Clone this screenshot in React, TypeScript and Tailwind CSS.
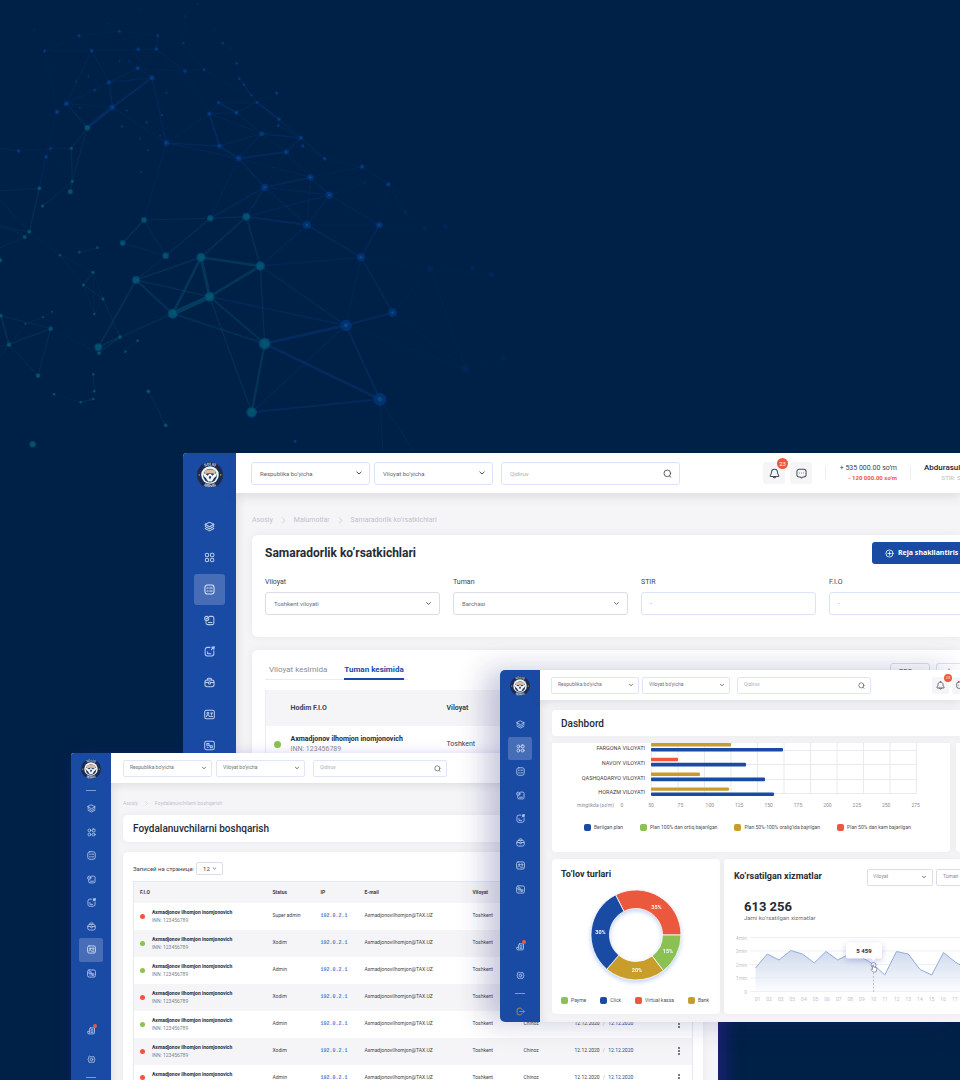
import React from "react";
import clsx from "clsx";

/* ---------- background constellation ---------- */

type Node = [number, number, number, "t" | "b" | "f"];

const NODES: Node[] = [
  [603, 772, 14, "t"], [781, 798, 14, "t"], [629, 890, 15, "t"], [518, 941, 15, "t"], [408, 840, 12, "t"],
  [794, 1031, 18, "t"], [755, 1237, 16, "t"], [1038, 976, 17, "b"], [1140, 1198, 19, "b"], [1178, 938, 13, "b"],
  [1083, 772, 12, "b"], [1138, 675, 10, "b"], [921, 675, 12, "b"], [739, 650, 12, "t"], [631, 655, 10, "t"],
  [497, 767, 10, "t"], [432, 660, 9, "t"], [368, 729, 9, "t"], [794, 562, 11, "b"], [988, 585, 11, "b"],
  [931, 532, 10, "b"], [716, 475, 9, "b"], [658, 438, 8, "b"], [499, 429, 9, "b"], [628, 341, 7, "b"],
  [656, 308, 6, "b"], [709, 338, 7, "b"], [785, 401, 8, "b"], [859, 456, 8, "b"], [903, 414, 7, "b"],
  [837, 358, 6, "b"], [771, 307, 5, "b"], [754, 286, 4, "b"], [731, 254, 4, "b"], [718, 236, 4, "b"],
  [262, 383, 9, "t"], [337, 322, 9, "b"], [199, 311, 8, "b"], [327, 247, 7, "b"], [456, 233, 8, "b"],
  [413, 205, 7, "b"], [171, 336, 7, "b"], [275, 152, 6, "b"], [237, 107, 5, "b"], [358, 94, 5, "b"],
  [415, 148, 6, "b"], [469, 147, 6, "b"], [473, 107, 5, "b"], [134, 153, 5, "b"], [555, 214, 6, "b"],
  [612, 209, 5, "b"], [214, 445, 5, "t"], [152, 445, 5, "b"], [138, 470, 6, "b"], [118, 565, 6, "t"],
  [217, 544, 5, "t"], [211, 575, 8, "t"], [128, 618, 5, "t"], [88, 695, 6, "t"], [74, 711, 6, "t"],
  [180, 766, 4, "t"], [279, 817, 5, "t"], [250, 855, 5, "t"], [309, 897, 5, "t"], [283, 942, 4, "t"],
  [360, 1011, 6, "t"], [295, 1042, 12, "t"], [297, 1059, 6, "t"], [152, 986, 7, "t"], [27, 1034, 7, "t"],
  [3, 947, 6, "t"], [114, 1127, 7, "t"], [98, 1333, 10, "t"], [445, 1174, 6, "t"], [497, 1276, 6, "t"],
  [280, 1123, 4, "t"], [283, 1174, 4, "t"], [280, 1197, 4, "t"], [242, 1207, 4, "t"], [162, 1183, 4, "t"],
  [238, 757, 4, "t"], [292, 743, 4, "t"], [376, 1055, 4, "t"], [413, 1022, 4, "t"], [1291, 806, 9, "f"],
  [1397, 1107, 12, "f"], [1086, 500, 7, "b"], [1094, 548, 6, "f"], [1165, 553, 7, "b"], [1216, 638, 7, "f"],
  [1275, 686, 7, "f"], [1335, 680, 7, "f"], [974, 476, 6, "b"], [908, 438, 5, "b"], [835, 377, 4, "b"],
  [830, 279, 5, "b"], [710, 190, 4, "b"], [692, 146, 4, "f"], [668, 130, 4, "b"], [643, 88, 4, "f"],
  [550, 130, 4, "b"], [555, 48, 5, "f"], [593, 11, 5, "f"], [418, 30, 4, "f"], [322, 70, 5, "f"],
  [103, 88, 5, "f"], [56, 453, 6, "b"], [486, 345, 4, "b"], [440, 367, 4, "b"], [366, 379, 4, "b"],
  [284, 270, 4, "b"], [76, 971, 3, "t"], [129, 952, 3, "t"], [156, 935, 3, "t"], [1475, 824, 8, "f"],
  [1418, 805, 8, "f"], [500, 279, 3, "b"], [420, 415, 3, "b"], [480, 407, 3, "b"], [423, 516, 3, "b"],
  [0, 781, 7, "t"], [885, 1324, 5, "b"], [240, 323, 3, "b"], [228, 245, 3, "b"], [265, 229, 3, "b"],
  [388, 184, 3, "b"], [359, 184, 3, "b"], [444, 450, 3, "b"], [380, 332, 3, "b"], [1512, 1075, 8, "f"],
];

/* [from, to, stroke width] */
const EDGES: [number, number, number][] = [
  [0, 1, 8], [0, 2, 9], [0, 3, 8], [0, 4, 5], [1, 2, 8], [2, 3, 13], [2, 4, 4], [3, 4, 6], [2, 5, 6], [3, 5, 5],
  [1, 5, 4], [2, 6, 4], [5, 6, 7], [5, 7, 8], [2, 7, 5], [1, 7, 5], [6, 7, 4], [5, 8, 8], [6, 8, 6], [7, 8, 6],
  [7, 9, 6], [9, 10, 5], [7, 10, 3], [1, 10, 4], [10, 11, 5], [10, 12, 5], [1, 12, 4], [12, 13, 6], [13, 1, 5],
  [0, 13, 5], [13, 14, 4], [14, 15, 4], [14, 16, 3], [15, 16, 3], [16, 17, 5], [15, 17, 3], [4, 15, 3],
  [13, 18, 5], [14, 18, 5], [18, 12, 4], [18, 19, 4], [18, 20, 5], [19, 20, 5], [12, 19, 4], [12, 20, 3],
  [13, 19, 4], [12, 11, 3], [19, 11, 4], [18, 21, 5], [21, 14, 3], [21, 22, 6], [22, 23, 5], [21, 23, 4],
  [23, 16, 3], [22, 24, 6], [23, 24, 3], [24, 26, 3], [25, 26, 6], [24, 25, 3], [26, 27, 3], [22, 27, 4],
  [21, 27, 4], [21, 28, 6], [28, 29, 5], [27, 29, 5], [29, 30, 4], [30, 31, 4], [31, 32, 3], [32, 33, 5],
  [33, 34, 3], [26, 31, 3], [25, 31, 3], [20, 28, 3], [18, 28, 2], [21, 20, 3], [27, 28, 3], [24, 27, 3],
  [35, 36, 9], [35, 37, 5], [36, 37, 3], [36, 38, 5], [36, 39, 6], [38, 39, 4], [38, 40, 4], [39, 40, 3],
  [37, 42, 3], [38, 42, 3], [42, 43, 2], [43, 44, 2], [42, 45, 2], [45, 46, 3], [46, 47, 3], [44, 47, 2],
  [43, 48, 2], [42, 48, 2], [41, 48, 2], [37, 41, 3], [37, 38, 3], [39, 23, 4], [36, 23, 3], [35, 51, 3],
  [51, 52, 3], [52, 53, 2], [53, 54, 4], [51, 55, 3], [52, 55, 2], [35, 55, 3], [55, 56, 4], [55, 57, 3],
  [54, 58, 4], [58, 59, 3], [58, 60, 2], [60, 61, 2], [61, 62, 4], [60, 62, 2], [62, 63, 3], [61, 63, 2],
  [61, 64, 2], [62, 64, 2], [63, 64, 2], [63, 65, 3], [3, 65, 4], [65, 66, 5], [65, 67, 4], [4, 66, 5],
  [67, 68, 2], [68, 69, 4], [69, 70, 5], [68, 70, 3], [69, 71, 3], [68, 71, 3], [73, 74, 3], [75, 76, 3],
  [77, 78, 4], [78, 79, 2], [80, 81, 3], [82, 83, 2], [40, 46, 2], [46, 49, 3], [49, 24, 2], [49, 50, 2],
  [50, 100, 2], [100, 101, 2], [101, 102, 2], [50, 31, 2], [34, 96, 2], [96, 97, 2], [97, 98, 2], [98, 99, 2],
  [31, 95, 2], [31, 30, 5], [30, 94, 4], [94, 29, 3], [29, 92, 4], [93, 92, 3], [20, 86, 3], [92, 86, 2],
  [19, 87, 3], [20, 87, 2], [86, 88, 3], [88, 89, 3], [89, 90, 3], [88, 91, 2], [88, 11, 2], [11, 90, 2],
  [9, 84, 3], [10, 84, 2], [84, 85, 3], [7, 85, 3], [9, 85, 3], [84, 114, 2], [91, 114, 2], [11, 84, 2],
  [41, 53, 2], [52, 106, 2], [107, 108, 2], [69, 111, 2], [111, 112, 2], [112, 113, 2], [85, 129, 2],
  [44, 39, 2], [40, 49, 2], [39, 107, 2], [37, 110, 2],
];

const NODE_OUTER = { t: "#03437a", b: "#02347c", f: "#022a66" };
const NODE_INNER = { t: "#055a70", b: "#0a4f7c", f: "#023070" };

function Constellation() {
  return (
    <svg className="absolute left-0 top-0 h-[450px] w-[520px]" viewBox="0 0 1560 1350" aria-hidden="true">
      {EDGES.map(([a, b, w], i) => {
        const teal = NODES[a][3] === "t" && NODES[b][3] === "t";
        const faint = NODES[a][3] === "f" || NODES[b][3] === "f";
        return (
          <line
            key={i}
            x1={NODES[a][0]} y1={NODES[a][1]} x2={NODES[b][0]} y2={NODES[b][1]}
            stroke={teal ? "#0a6a86" : "#0a4aa0"}
            strokeOpacity={faint ? 0.08 : teal ? 0.12 + w * 0.02 : 0.08 + w * 0.022}
            strokeWidth={w}
          />
        );
      })}
      <path
        d="M0 572 118 565M0 600 88 695M0 672 74 711M0 681 88 695M0 743 74 711M0 1040 27 1034M0 1070 27 1034M0 444 56 453M1140 1198 1148 1350M1140 1198 1240 1350"
        fill="none" stroke="#0a5a86" strokeOpacity="0.18" strokeWidth="3"
      />
      {NODES.map(([x, y, r, kind], i) => (
        <g key={i} opacity={kind === "f" ? 0.45 : 0.85}>
          <circle cx={x} cy={y} r={r} fill={NODE_OUTER[kind]} />
          <circle cx={x} cy={y} r={kind === "t" ? r * 0.75 : r * 0.38} fill={NODE_INNER[kind]} />
        </g>
      ))}
    </svg>
  );
}

/* ---------- icons ---------- */

const ICONS = {
  layers: (
    <>
      <path d="M12 2.5 21.5 7.5 12 12.5 2.5 7.5Z" />
      <path d="M2.5 12 12 17l9.5-5M2.5 16.500 12 21.500l9.500-5" />
      <path d="M3 6v3M21 6v3" />
    </>
  ),
  grid: (
    <>
      <circle cx="6.500" cy="6.500" r="3.800" />
      <rect x="14" y="2.700" width="7.600" height="7.600" rx="2.500" />
      <circle cx="6.500" cy="17.500" r="3.800" />
      <circle cx="17.800" cy="17.500" r="3.800" />
    </>
  ),
  list: (
    <>
      <rect x="2" y="2" width="20" height="20" rx="5.500" />
      <path d="M6.500 8.500h2.500M12.500 8.500h5.500M6.500 15.500h2.500M12.500 15.500h5.500" />
    </>
  ),
  report: (
    <>
      <path d="M12 3h6a3.500 3.500 0 0 1 3.500 3.500v11A3.500 3.500 0 0 1 18 21H8a3.500 3.500 0 0 1-3.500-3.500V14" />
      <circle cx="6" cy="7.500" r="4.500" />
      <path d="m4.300 7.500 1.400 1.400L8.500 6.200M9.500 16.500h8" />
    </>
  ),
  edit: (
    <>
      <path d="M13 3H7.500A5 5 0 0 0 2.500 8v9A5 5 0 0 0 7.500 22h9a5 5 0 0 0 5-5v-6.500" />
      <path d="m16 8 4-4" />
      <path d="M17 2.500 22.500 1.500 21.500 7Z" fill="currentColor" />
      <path d="M8 12.500V17h7" />
    </>
  ),
  briefcase: (
    <>
      <rect x="2" y="6.500" width="20" height="15" rx="5" />
      <path d="M7.500 6.500V5A2.500 2.500 0 0 1 10 2.500h4A2.500 2.500 0 0 1 16.500 5v1.500M2.500 12H9M15 12h6.500" />
      <circle cx="12" cy="13" r="2.500" />
    </>
  ),
  idcard: (
    <>
      <rect x="1.500" y="2.500" width="21" height="19" rx="4" />
      <circle cx="8.500" cy="9.500" r="2" />
      <path d="M5 16.500c.5-2.500 1.800-3.500 3.500-3.500s3 1 3.500 3.500M14.500 8.500h4.500M16.500 8.500V13M14.500 16.500H19" />
    </>
  ),
  percent: (
    <>
      <rect x="1.500" y="2.500" width="21" height="19" rx="4" />
      <path d="M6 7.500h5v4H6ZM11 11.500l3 3M14 12.500h4V17h-4ZM7 16h2" />
    </>
  ),
  news: (
    <>
      <path d="M9 5h11v13a3 3 0 0 1-3 3H5a3 3 0 0 1-3-3v-4h5V7a2 2 0 0 1 2-2Z" />
      <path d="M7 14v4M11 10h5M11 13.500h5M11 17h5" />
    </>
  ),
  gear: (
    <>
      <path d="m8 3.500 2 1.500h4l2-1.500 3.500 2.200-.2 2.600 2 3.700-2 3.700.2 2.600L16 20.500 14 19h-4l-2 1.500-3.500-2.200.2-2.600-2-3.700 2-3.700-.2-2.600Z" />
      <circle cx="12" cy="12" r="3.300" />
    </>
  ),
  logout: (
    <>
      <path d="M16 6.500A5 5 0 0 0 12 3H8a5 5 0 0 0-5 5v8a5 5 0 0 0 5 5h4a5 5 0 0 0 4-3.500" />
      <path d="M10 12h12M18.500 8.500 22 12l-3.500 3.500" />
    </>
  ),
  bell: (
    <>
      <path d="M12 2.500c-4 0-6.500 3-6.500 6.500 0 4.500-3 6-3 8.500 0 .8.500 1.200 1.500 1.200h16c1 0 1.500-.4 1.500-1.200 0-2.500-3-4-3-8.500 0-3.500-2.500-6.500-6.500-6.500Z" />
      <path d="M9 19c.3 1.500 1.500 2.500 3 2.500s2.700-1 3-2.500" />
    </>
  ),
  chat: (
    <>
      <path d="M7 2.500h10a5 5 0 0 1 5 5v7a5 5 0 0 1-5 5h-2L12 22l-3-2.500H7a5 5 0 0 1-5-5v-7a5 5 0 0 1 5-5Z" />
      <path d="M7.500 11h.2M12 11h.2M16.300 11h.2" strokeWidth="1.500" />
    </>
  ),
  search: (
    <>
      <circle cx="11.500" cy="11.500" r="8.800" />
      <path d="m17.500 19 3.500 2.500" />
    </>
  ),
  plus: (
    <>
      <circle cx="12" cy="12" r="9.500" />
      <path d="M12 7.500v9M7.500 12h9" />
    </>
  ),
  chevronDown: <path d="m5.500 9 6.500 6 6.500-6" strokeWidth="3" />,
  chevronRight: <path d="m8 3 9 9-9 9" />,
  download: <path d="M12 3v13M6 11l6 6 6-6" />,
};

type IconName = keyof typeof ICONS;

function Icon({ name, className }: { name: IconName; className: string }) {
  return (
    <svg
      viewBox="0 0 24 24"
      className={clsx("shrink-0", className)}
      fill="none" stroke="currentColor" strokeWidth="2.200" strokeLinecap="round" strokeLinejoin="round"
      aria-hidden="true"
    >
      {ICONS[name]}
    </svg>
  );
}

function Emblem({ id, className }: { id: string; className: string }) {
  return (
    <svg viewBox="0 0 80 80" className={clsx("shrink-0", className)} role="img" aria-label="Soliq servis">
      <defs>
        <path id={id + "-top"} d="M10 40a30 30 0 0 1 60 0" />
        <path id={id + "-bottom"} d="M2 40a38 38 0 0 0 76 0" />
      </defs>
      <circle cx="40" cy="40" r="40" fill="#1e2a4f" />
      <circle cx="40" cy="40" r="27" fill="#e4fbf8" />
      <circle cx="40" cy="42" r="21" fill="#26335a" />
      <path d="M22 28q18-12 36 0l-2 9q-16-5-32 0Z" fill="#e0b8a4" />
      <path d="M18 33q12 5 15 9 3-6 7-6t7 6q3-4 15-9-1 12-10 17l-6 10H34l-6-10q-9-5-10-17Z" fill="#f1f6fb" />
      <path d="m36 46 4 8 4-8-4-4Z" fill="#26335a" />
      <circle cx="7" cy="40" r="2.500" fill="#dba32c" />
      <circle cx="73" cy="40" r="2.500" fill="#dba32c" />
      <g fill="#dfe6f2" className="font-['Roboto',sans-serif] font-bold" fontSize="12" textAnchor="middle">
        <text><textPath href={"#" + id + "-top"} startOffset="50%">SOLIQ</textPath></text>
        <text><textPath href={"#" + id + "-bottom"} startOffset="50%">SERVIS</textPath></text>
      </g>
    </svg>
  );
}

/* ---------- shared controls ---------- */

const NAV: { name: IconName; label: string }[] = [
  { name: "layers", label: "Asosiy" },
  { name: "grid", label: "Dashbord" },
  { name: "list", label: "Samaradorlik" },
  { name: "report", label: "Hisobot" },
  { name: "edit", label: "Ariza" },
  { name: "briefcase", label: "Xizmatlar" },
  { name: "idcard", label: "Foydalanuvchilar" },
  { name: "percent", label: "Soliqlar" },
];

function Nav({ active, large }: { active: IconName; large?: boolean }) {
  return (
    <nav className={clsx("flex flex-col items-center justify-between", large ? "h-[250px]" : "h-[188px]")}>
      {NAV.map((n) => (
        <a
          key={n.name}
          href={"#" + n.name}
          aria-label={n.label}
          className={clsx(
            "flex items-center justify-center text-[#b9cbec]",
            large ? "size-[31px] rounded-[3px]" : "size-[24px] rounded-[2px]",
            active === n.name && "bg-[#476db6] text-[#dbe4f5]",
          )}
        >
          <Icon name={n.name} className={large ? "size-[11px]" : "size-[9px]"} />
        </a>
      ))}
    </nav>
  );
}

function SmallSidebar({ id, active, divider }: { id: string; active: IconName; divider?: boolean }) {
  return (
    <aside className="flex w-[40px] shrink-0 flex-col items-center bg-[#194ba5] pt-[6px] text-[#b9cbec]">
      <Emblem id={id} className="size-[20px]" />
      <div className={clsx("mt-[11px] h-px w-[10px]", divider ? "mb-[6px] bg-[#7d9ad2]" : "mb-[5px]")} />
      <Nav active={active} />
      <a href="#news" aria-label="Yangiliklar" className="relative mt-[39px] flex h-[12px] items-center">
        <Icon name="news" className="size-[9px]" />
        <span className="absolute -right-px top-0 size-[4px] rounded-full bg-[#f0563c]" />
      </a>
      <a href="#settings" aria-label="Sozlamalar" className="mt-[17px] flex h-[12px] items-center">
        <Icon name="gear" className="size-[9px]" />
      </a>
      <div className="mt-[12px] h-px w-[10px] bg-[#7d9ad2]" />
      <a href="#logout" aria-label="Chiqish" className="mb-[5px] mt-[11px] flex h-[12px] items-center text-[#b99a3d]">
        <Icon name="logout" className="size-[9px]" />
      </a>
    </aside>
  );
}

function Select({ label, id, value, className, textClass, chevron }: {
  label?: string; id?: string; value: string; className: string; textClass: string; chevron: string;
}) {
  return (
    <div className={clsx("flex shrink-0 items-center border bg-white", className)}>
      <select
        id={id}
        aria-label={label}
        defaultValue={value}
        className={clsx("min-w-0 flex-1 appearance-none bg-transparent outline-none", textClass)}
      >
        <option>{value}</option>
      </select>
      <Icon name="chevronDown" className={clsx("pointer-events-none text-[#4a4f5a]", chevron)} />
    </div>
  );
}

function SmallTopbar({ alerts }: { alerts?: boolean }) {
  const box = "h-[17px] rounded-[2px] border-[#dfe6fa] pl-[6px] pr-[4px]";
  const selectWidth = alerts ? "w-[88px]" : "w-[89px]";
  return (
    <header className={clsx(
      "z-10 flex h-[30px] shrink-0 items-center bg-white shadow-[0_2px_8px_rgba(70,75,95,0.14)]",
      alerts ? "gap-[3px] pl-[11px]" : "gap-[4px] pl-[12px]",
    )}>
      <Select label="Respublika" value="Respublika bo’yicha" className={clsx(selectWidth, box)} textClass="text-[5px] text-[#6b7079]" chevron="size-[6px]" />
      <Select label="Viloyat" value="Viloyat bo’yicha" className={clsx(selectWidth, box)} textClass="text-[5px] text-[#6b7079]" chevron="size-[6px]" />
      <div className={clsx("ml-[4px] flex w-[134px] shrink-0 items-center border", box)}>
        <input aria-label="Qidiruv" placeholder="Qidiruv" className="min-w-0 flex-1 bg-transparent text-[5px] outline-none placeholder:text-[#a9adb6]" />
        <Icon name="search" className="mr-px size-[7px] text-[#4a4f5a]" />
      </div>
      {alerts && (
        <div className="ml-[58px] flex shrink-0 gap-[3px]">
          <button aria-label="Bildirishnomalar" className="relative flex size-[17px] items-center justify-center rounded-[2px] bg-[#f5f5f7] text-[#474c57]">
            <Icon name="bell" className="size-[9px]" />
            <span className="absolute -right-[3px] -top-[3px] flex size-[8px] items-center justify-center rounded-full bg-[#f0563c] text-[4px] leading-none text-white">23</span>
          </button>
          <button aria-label="Xabarlar" className="flex size-[17px] items-center justify-center rounded-[2px] bg-[#f5f5f7] text-[#474c57]">
            <Icon name="chat" className="size-[9px]" />
          </button>
        </div>
      )}
    </header>
  );
}

/* ---------- performance window ---------- */

function PerformanceWindow() {
  const field = "h-[23px] w-full rounded-[3px] pl-[8px] pr-[7px]";
  return (
    <section className="absolute left-[183px] right-0 top-[453px] isolate flex overflow-hidden rounded-l-[4px] bg-[#f5f5f7]">
      <aside className="flex w-[53px] shrink-0 flex-col items-center bg-[#194ba5] pt-[9px]">
        <Emblem id="emblem-a" className="mb-[23px] size-[26px]" />
        <Nav active="list" large />
      </aside>
      <div className="flex min-w-0 flex-1 flex-col shadow-[inset_6px_0_8px_-4px_rgba(70,75,95,0.12)]">
        <header className="z-10 flex h-[40px] shrink-0 items-center bg-white pl-[15px] shadow-[0_3px_10px_rgba(70,75,95,0.15)]">
          <Select label="Respublika" value="Respublika bo’yicha" className="h-[23px] w-[119px] rounded-[3px] border-[#dbe3fb] pl-[8px] pr-[6px]" textClass="text-[6px] text-[#62666f]" chevron="size-[8px]" />
          <Select label="Viloyat" value="Viloyat bo’yicha" className="ml-[4px] h-[23px] w-[119px] rounded-[3px] border-[#dbe3fb] pl-[8px] pr-[6px]" textClass="text-[6px] text-[#62666f]" chevron="size-[8px]" />
          <div className="ml-[8px] flex h-[23px] w-[179px] shrink-0 items-center rounded-[3px] border border-[#dbe3fb] pl-[8px] pr-[7px]">
            <input aria-label="Qidiruv" placeholder="Qidiruv" className="min-w-0 flex-1 bg-transparent text-[6px] outline-none placeholder:text-[#a9adb6]" />
            <Icon name="search" className="size-[9px] text-[#3d424d]" />
          </div>
          <div className="ml-[83px] flex shrink-0 gap-[5px] text-[#474c57]">
            <button aria-label="Bildirishnomalar" className="relative flex size-[22px] items-center justify-center rounded-[3px] bg-[#f5f5f7]">
              <Icon name="bell" className="size-[11px]" />
              <span className="absolute -right-[3px] -top-[4px] flex size-[11px] items-center justify-center rounded-full bg-[#f0563c] text-[6px] leading-none text-white">23</span>
            </button>
            <button aria-label="Xabarlar" className="flex size-[22px] items-center justify-center rounded-[3px] bg-[#f5f5f7]">
              <Icon name="chat" className="size-[11px]" />
            </button>
          </div>
          <div className="ml-[13px] h-[14px] w-px shrink-0 bg-[#eeeff2]" />
          <div className="flex w-[71px] shrink-0 flex-col items-end leading-[10px]">
            <span className="text-[7px] text-[#3d424d]">+ 535 000.00 so’m</span>
            <span className="text-[6px] font-bold text-[#f0563c]">- 120 000.00 so’m</span>
          </div>
          <div className="ml-[13px] h-[14px] w-px shrink-0 bg-[#eeeff2]" />
          <div className="ml-[13px] flex shrink-0 flex-col items-end leading-[10px]">
            <span className="text-[8px] font-medium text-[#20242e]">Abdurasul</span>
            <span className="text-[6px] text-[#b9bcc9]">STIR: 5</span>
          </div>
        </header>

        <div className="flex flex-col pl-[16px]">
          <nav aria-label="Yo‘l" className="flex h-[42px] items-center gap-[7px] pt-[12px] text-[7px] text-[#bfc1d0]">
            <a href="#asosiy">Asosiy</a>
            <Icon name="chevronRight" className="size-[7px]" />
            <a href="#malumotlar">Malumotlar</a>
            <Icon name="chevronRight" className="size-[7px]" />
            <a href="#samaradorlik">Samaradorlik ko’rsatkichlari</a>
          </nav>

          <div className="rounded-l-[6px] bg-white pb-[22px] pl-[13px] shadow-[0_0_8px_rgba(70,75,95,0.08)]">
            <div className="flex h-[36px] items-center justify-between">
              <h1 className="shrink-0 text-[12px] font-bold leading-[16px] text-[#262b36]">Samaradorlik ko’rsatkichlari</h1>
              <button className="flex h-[22px] w-[88px] shrink-0 items-center gap-[4px] whitespace-nowrap rounded-l-[3px] bg-[#194ba5] pl-[13px] font-['Noto_Sans',sans-serif] text-[7px] font-bold text-white">
                <Icon name="plus" className="size-[9px]" />
                Reja shakllantiris
              </button>
            </div>
            <div className="flex gap-[13px] pt-[6px] text-[7px] text-[#3d424d]">
              <div className="flex w-[175px] shrink-0 flex-col gap-[5px]">
                <label htmlFor="viloyat" className="leading-[10px]">Viloyat</label>
                <Select id="viloyat" value="Toshkent viloyati" className={clsx(field, "border-[#dcdde8]")} textClass="text-[6px] text-[#6b7079]" chevron="size-[7px]" />
              </div>
              <div className="flex w-[175px] shrink-0 flex-col gap-[5px]">
                <label htmlFor="tuman" className="leading-[10px]">Tuman</label>
                <Select id="tuman" value="Barchasi" className={clsx(field, "border-[#dcdde8]")} textClass="text-[6px] text-[#6b7079]" chevron="size-[7px]" />
              </div>
              <div className="flex w-[175px] shrink-0 flex-col gap-[5px]">
                <label htmlFor="stir" className="leading-[10px]">STIR</label>
                <input id="stir" placeholder="-" className={clsx(field, "border border-[#dbe3fb] outline-none placeholder:text-[#a9adb6]")} />
              </div>
              <div className="flex w-[175px] shrink-0 flex-col gap-[5px]">
                <label htmlFor="fio" className="leading-[10px]">F.I.O</label>
                <input id="fio" placeholder="-" className={clsx(field, "border border-[#dbe3fb] outline-none placeholder:text-[#a9adb6]")} />
              </div>
            </div>
          </div>

          <div className="mt-[13px] rounded-tl-[6px] bg-white pb-[16px] pl-[13px] shadow-[0_0_8px_rgba(70,75,95,0.08)]">
            <div className="flex h-[40px] items-start justify-between pt-[13px]">
              <div className="flex h-[17px] gap-[17px] border-b border-[#ececf0] px-[4px] text-[8px] text-[#8a8d96]">
                <button className="h-[17px] pb-[3px]">Viloyat kesimida</button>
                <button className="h-[17px] border-b-2 border-[#194ba5] pb-px font-bold text-[#194ba5]">Tuman kesimida</button>
              </div>
              <div className="flex gap-[6px]">
                <Select label="Format" value="PDF" className="h-[18px] w-[40px] rounded-[3px] border-[#dcdde8] pl-[8px] pr-[5px]" textClass="text-[7px] text-[#3d424d]" chevron="size-[7px]" />
                <button aria-label="Yuklab olish" className="flex h-[18px] w-[24px] items-center justify-center rounded-l-[3px] border border-r-0 border-[#dbe3fb] text-[#194ba5]">
                  <Icon name="download" className="size-[8px]" />
                </button>
              </div>
            </div>
            <table className="w-full table-fixed border-l border-[#e6edfb] text-left text-[7px] text-[#3d424d]">
              <colgroup>
                <col className="w-[25px]" />
                <col className="w-[156px]" />
                <col />
              </colgroup>
              <thead className="bg-[#f5f5f7]">
                <tr className="h-[36px]">
                  <th aria-label="Holat" />
                  <th className="font-bold">Hodim F.I.O</th>
                  <th className="font-bold">Viloyat</th>
                </tr>
              </thead>
              <tbody>
                {[0, 1, 2, 3].map((r) => (
                  <tr key={r} className="h-[36px] even:bg-[#f5f5f7]">
                    <td><span className="ml-[8px] block size-[7px] rounded-full bg-[#8bc24f]" /></td>
                    <td className="leading-[10px]">
                      <div className="font-bold text-[#262b36]">Axmadjonov ilhomjon inomjonovich</div>
                      <div className="text-[#8a8d96]">INN: 123456789</div>
                    </td>
                    <td>Toshkent</td>
                  </tr>
                ))}
              </tbody>
            </table>
          </div>
        </div>
      </div>
    </section>
  );
}

/* ---------- users window ---------- */

const USERS = [
  { role: "Super admin", online: false },
  { role: "Xodim", online: true },
  { role: "Admin", online: true },
  { role: "Xodim", online: false },
  { role: "Admin", online: true },
  { role: "Xodim", online: false },
  { role: "Admin", online: false },
];

function UsersWindow() {
  return (
    <section className="absolute left-[71px] right-[242px] top-[753px] isolate flex rounded-t-[3px] bg-[#f5f5f7] shadow-[6px_8px_18px_rgba(58,34,170,0.55)]">
      <div className="flex min-w-0 flex-1 overflow-hidden rounded-t-[3px]">
        <SmallSidebar id="emblem-b" active="idcard" divider />
        <div className="flex min-w-0 flex-1 flex-col shadow-[inset_6px_0_8px_-4px_rgba(70,75,95,0.12)]">
          <SmallTopbar />
          <div className="flex flex-col pl-[12px] pr-[15px]">
            <nav aria-label="Yo‘l" className="flex h-[32px] items-center gap-[6px] pt-[9px] text-[5px] text-[#bfc1d0]">
              <a href="#asosiy">Asosiy</a>
              <Icon name="chevronRight" className="size-[5px]" />
              <a href="#foydalanuvchilar">Foydalanuvchilarni boshqarish</a>
            </nav>
            <h2 className="flex h-[27px] items-center rounded-[5px] bg-white pl-[10px] text-[10px] font-medium text-[#262b36] shadow-[0_0_6px_rgba(70,75,95,0.07)]">
              Foydalanuvchilarni boshqarish
            </h2>
            <div className="mt-[10px] rounded-t-[5px] bg-white px-[10px] pb-[10px] shadow-[0_0_6px_rgba(70,75,95,0.07)]">
              <div className="flex h-[29px] items-center gap-[2px] pt-[3px] text-[6px] text-[#3d424d]">
                <label htmlFor="page-size">Записей на странице:</label>
                <Select id="page-size" value="12" className="h-[13px] w-[27px] rounded-[2px] border-[#dcdde8] pl-[6px] pr-[5px]" textClass="text-[6px] text-[#3d424d]" chevron="size-[5px]" />
              </div>
              <table className="w-full table-fixed border border-[#e3e9f6] text-left text-[5px] text-[#3d424d]">
                <colgroup>
                  <col className="w-[139px]" />
                  <col className="w-[48px]" />
                  <col className="w-[44px]" />
                  <col className="w-[108px]" />
                  <col className="w-[51px]" />
                  <col className="w-[51px]" />
                  <col className="w-[98px]" />
                  <col />
                </colgroup>
                <thead className="bg-[#f5f5f7]">
                  <tr className="h-[21px]">
                    <th className="pl-[6px] font-bold">F.I.O</th>
                    <th className="font-bold">Status</th>
                    <th className="font-bold">IP</th>
                    <th className="font-bold">E-mail</th>
                    <th className="font-bold">Viloyat</th>
                    <th className="font-bold">Tuman</th>
                    <th className="font-bold">Sana</th>
                    <th aria-label="Amallar" />
                  </tr>
                </thead>
                <tbody>
                  {USERS.map((u, i) => (
                    <tr key={i} className="h-[27px] even:bg-[#f5f5f7]">
                      <td>
                        <div className="flex items-center gap-[7px] pl-[6px] leading-[8px]">
                          <span className={clsx("size-[5px] rounded-full", u.online ? "bg-[#8bc24f]" : "bg-[#f0563c]")} />
                          <div>
                            <div className="font-bold text-[#262b36]">Axmadjonov ilhomjon inomjonovich</div>
                            <div className="text-[#7d818b]">INN: 123456789</div>
                          </div>
                        </div>
                      </td>
                      <td>{u.role}</td>
                      <td><a href="#ip" className="font-['Liberation_Mono',monospace] font-bold text-[#5b82c8]">192.0.2.1</a></td>
                      <td>Axmadjonovilhomjon@TAX.UZ</td>
                      <td>Toshkent</td>
                      <td>Chinoz</td>
                      <td>12.12.2020 <span className="mx-[2px] text-[#a9adb6]">/</span> <span className="text-[#194ba5]">12.12.2020</span></td>
                      <td>
                        <button aria-label="Amallar" className="flex flex-col gap-px pl-[5px]">
                          <span className="size-[2px] rounded-full bg-[#4a4f5a]" />
                          <span className="size-[2px] rounded-full bg-[#4a4f5a]" />
                          <span className="size-[2px] rounded-full bg-[#4a4f5a]" />
                        </button>
                      </td>
                    </tr>
                  ))}
                </tbody>
              </table>
            </div>
          </div>
        </div>
      </div>
    </section>
  );
}

/* ---------- dashboard window ---------- */

const REGIONS = [
  { name: "FARGONA VILOYATI", plan: 132, done: 80, color: "#c99b2a" },
  { name: "NAVOIY VILOYATI", plan: 95, done: 27, color: "#f0563c" },
  { name: "QASHQADARYO VILOYATI", plan: 114, done: 49, color: "#c99b2a" },
  { name: "HORAZM VILOYATI", plan: 123, done: 78, color: "#c99b2a" },
];

function RegionsChart() {
  const scale = ["50", "75", "100", "125", "150", "175", "200", "225", "250", "275"];
  return (
    <svg viewBox="0 0 398 72" className="block h-[72px] w-[398px]" role="img" aria-label="Viloyatlar">
      <g stroke="#e9eaee" strokeWidth="1">
        {Array.from({ length: 11 }, (_, i) => (
          <line key={i} x1={99.500 + i * 26.500} x2={99.500 + i * 26.500} y1="0" y2="51" />
        ))}
        {[7.500, 21.500, 36.500, 50.500].map((y) => (
          <line key={y} x1="99" x2="364" y1={y} y2={y} />
        ))}
      </g>
      {REGIONS.map((r, i) => (
        <g key={r.name}>
          <text x="93" y={7 + i * 14.800} textAnchor="end" fontSize="5.500" fill="#3d424d">{r.name}</text>
          <rect x="99" y={i * 14.800} width={r.done} height="3.400" rx="1" fill={r.color} />
          <rect x="99" y={5 + i * 14.800} width={r.plan} height="3.600" rx="1" fill="#194ba5" />
        </g>
      ))}
      <g fontSize="5" fill="#8a8d96">
        <text x="25" y="63.500">minglikda (so’m)</text>
        <text x="70" y="63.500" textAnchor="middle">0</text>
        {scale.map((s, i) => (
          <text key={s} x={99 + i * 29.400} y="63.500" textAnchor="middle">{s}</text>
        ))}
      </g>
    </svg>
  );
}

function Legend({ items, className }: { items: [string, string][]; className: string }) {
  return (
    <ul className={clsx("flex text-[5px] leading-[8px] text-[#4a4f5a]", className)}>
      {items.map(([color, text]) => (
        <li key={text} className="flex items-center gap-[3px] whitespace-nowrap">
          <span className="size-[7px] rounded-[2px]" style={{ backgroundColor: color }} />
          {text}
        </li>
      ))}
    </ul>
  );
}

const SLICES = [
  { from: -27, to: 90, color: "#ea583e", text: "35%", x: 20.500, y: -26.500 },
  { from: 90, to: 142.500, color: "#8bc152", text: "15%", x: 32, y: 17.500 },
  { from: 142.500, to: 220.500, color: "#c89d29", text: "20%", x: 1, y: 36.500 },
  { from: 220.500, to: 333, color: "#194ba5", text: "30%", x: -35.500, y: -1 },
];

function arc(from: number, to: number, outer: number, inner: number) {
  const at = (deg: number, r: number) => {
    const a = (deg * Math.PI) / 180;
    return `${(r * Math.sin(a)).toFixed(2)} ${(-r * Math.cos(a)).toFixed(2)}`;
  };
  return `M${at(from, outer)}A${outer} ${outer} 0 0 1 ${at(to, outer)}L${at(to, inner)}A${inner} ${inner} 0 0 0 ${at(from, inner)}Z`;
}

function Donut() {
  return (
    <svg viewBox="-50 -50 100 100" className="mx-auto block size-[100px] drop-shadow-[0_2px_2px_rgba(80,120,220,0.35)]" role="img" aria-label="To’lov turlari">
      {SLICES.map((s) => (
        <path key={s.text} d={arc(s.from, s.to, 45, 26.500)} fill={s.color} stroke="#fff" strokeWidth="0.8" />
      ))}
      <g fontSize="5.500" fontWeight="700" fill="#f4f6fa" textAnchor="middle">
        {SLICES.map((s) => (
          <text key={s.text} x={s.x} y={s.y}>{s.text}</text>
        ))}
      </g>
    </svg>
  );
}

const SERIES = [31, 17, 23, 13.500, 17, 26, 14.500, 23, 17, 20, 27, 38, 14.500, 17, 32.500, 38, 15.500, 25, 32];
const DAYS = ["01", "02", "03", "03", "04", "05", "06", "07", "08", "09", "10", "11", "12", "13", "14", "15", "16", "17"];

function ServicesChart() {
  const px = (i: number) => 21.500 + i * 11.750;
  const line = SERIES.map((y, i) => `${px(i)} ${y}`).join("L");
  return (
    <svg viewBox="0 0 236 74" className="block h-[74px] w-[236px]" role="img" aria-label="Ko’rsatilgan xizmatlar">
      <defs>
        <linearGradient id="services-fill" x1="0" x2="0" y1="0" y2="1">
          <stop offset="0" stopColor="#cfdaee" />
          <stop offset="1" stopColor="#fbfcfe" />
        </linearGradient>
      </defs>
      <g transform="translate(0 4)">
        <path d={`M${px(0)} 54L${line}L${px(18)} 54Z`} fill="url(#services-fill)" />
        <g stroke="#e6e7ef" strokeOpacity="0.8" strokeWidth="0.8">
          {[0.500, 14, 27.500, 41, 54.500].map((y) => (
            <line key={y} x1="16" x2="236" y1={y} y2={y} />
          ))}
        </g>
        <path d={`M${line}`} fill="none" stroke="#8facdb" strokeWidth="1" strokeLinejoin="round" />
        <g fontSize="5" fill="#bfc1d0">
          {["4min", "3min", "2min", "1min", "0"].map((t, i) => (
            <text key={t} x="13" y={2.500 + i * 13.500} textAnchor="end">{t}</text>
          ))}
          {DAYS.map((d, i) => (
            <text key={i} x={23.500 + i * 11.600} y="64" textAnchor="middle">{d}</text>
          ))}
        </g>
        <line x1="139.500" x2="139.500" y1="32" y2="55" stroke="#aab6d2" strokeWidth="0.8" strokeDasharray="2 1.500" />
        <circle cx="139.500" cy="28" r="2.500" fill="#fff" stroke="#7d9fd8" strokeWidth="1" />
        <path d="M138.500 28.500v4l-1-.6c-.8.4-.2 1 .2 1.600l1.300 1.500h3l.7-2v-2.200l-3-.7v-2q-.7-.6-1.200.4Z" fill="#fff" stroke="#4a4f5a" strokeWidth="0.5" />
        <g className="drop-shadow-[0_2px_3px_rgba(90,80,190,0.3)]">
          <path d="M114 5.500h32a2 2 0 0 1 2 2v12a2 2 0 0 1-2 2h-4l-2.500 2.300-2.500-2.300h-23a2 2 0 0 1-2-2v-12a2 2 0 0 1 2-2Z" fill="#fff" />
        </g>
        <text x="130" y="15.500" textAnchor="middle" fontSize="6" fontWeight="700" fill="#262b36">5 459</text>
      </g>
    </svg>
  );
}

function DashboardWindow() {
  const card = "bg-white shadow-[0_0_6px_rgba(70,75,95,0.07)]";
  return (
    <section className="absolute left-[500px] right-0 top-[670px] isolate flex rounded-l-[5px] bg-[#f5f5f7] shadow-[-14px_0_28px_rgba(40,40,125,0.26)]">
      <div className="flex min-w-0 flex-1 overflow-hidden rounded-l-[5px]">
        <SmallSidebar id="emblem-c" active="grid" />
        <div className="flex min-w-0 flex-1 flex-col shadow-[inset_6px_0_8px_-4px_rgba(70,75,95,0.12)]">
          <SmallTopbar alerts />
          <div className="flex flex-col gap-[7px] pb-[8px] pl-[12px] pt-[10px]">
            <h2 className={clsx("flex h-[26px] items-center rounded-l-[4px] pl-[9px] text-[10px] font-medium text-[#262b36]", card)}>Dashbord</h2>
            <div className="flex gap-[6px]">
              <div className={clsx("h-[109px] w-[398px] shrink-0 rounded-b-[4px]", card)}>
                <RegionsChart />
                <Legend
                  className="gap-[17px] pl-[32px] pt-[8px]"
                  items={[
                    ["#194ba5", "Berilgan plan"],
                    ["#8bc152", "Plan 100% dan ortiq bajarilgan"],
                    ["#c99b2a", "Plan 50%-100% oralig’ida bajrilgan"],
                    ["#f0563c", "Plan 50% dan kam bajarilgan"],
                  ]}
                />
              </div>
              <div className={clsx("min-w-0 flex-1 rounded-bl-[4px]", card)} />
            </div>
            <div className="flex gap-[4px]">
              <div className={clsx("flex h-[155px] w-[168px] shrink-0 flex-col rounded-[4px]", card)}>
                <h3 className="pl-[9px] pt-[9px] text-[9px] font-bold leading-[12px] text-[#262b36]">To’lov turlari</h3>
                <div className="pt-[5px]">
                  <Donut />
                </div>
                <Legend
                  className="gap-[14px] pl-[9px] pt-[11px]"
                  items={[["#8bc152", "Payme"], ["#194ba5", "Click"], ["#f0563c", "Virtual kassa"], ["#c99b2a", "Bank"]]}
                />
              </div>
              <div className={clsx("flex h-[155px] min-w-0 flex-1 flex-col overflow-hidden rounded-l-[4px]", card)}>
                <div className="flex h-[36px] items-center pl-[10px]">
                  <h3 className="w-[133px] shrink-0 text-[9px] font-bold text-[#262b36]">Ko’rsatilgan xizmatlar</h3>
                  <Select label="Viloyat" value="Viloyat" className="h-[17px] w-[66px] rounded-[2px] border-[#dcdde8] pl-[5px] pr-[5px]" textClass="text-[5px] text-[#8a8d96]" chevron="size-[6px]" />
                  <Select label="Tuman" value="Tuman" className="ml-[3px] h-[17px] w-[66px] rounded-[2px] border-[#dcdde8] pl-[6px] pr-[5px]" textClass="text-[5px] text-[#8a8d96]" chevron="size-[6px]" />
                </div>
                <div className="pl-[20px] pt-[4px]">
                  <div className="text-[13px] font-bold leading-[15px] text-[#262b36]">613 256</div>
                  <div className="text-[6px] leading-[8px] text-[#6b7079]">Jami ko’rsatilgan xizmatlar</div>
                </div>
                <div className="pl-[10px] pt-[11px]">
                  <ServicesChart />
                </div>
              </div>
            </div>
          </div>
        </div>
      </div>
    </section>
  );
}

export default function App() {
  return (
    <main className="relative min-h-screen overflow-hidden bg-[#002147] font-['Roboto',sans-serif]">
      <Constellation />
      <PerformanceWindow />
      <UsersWindow />
      <DashboardWindow />
    </main>
  );
}
